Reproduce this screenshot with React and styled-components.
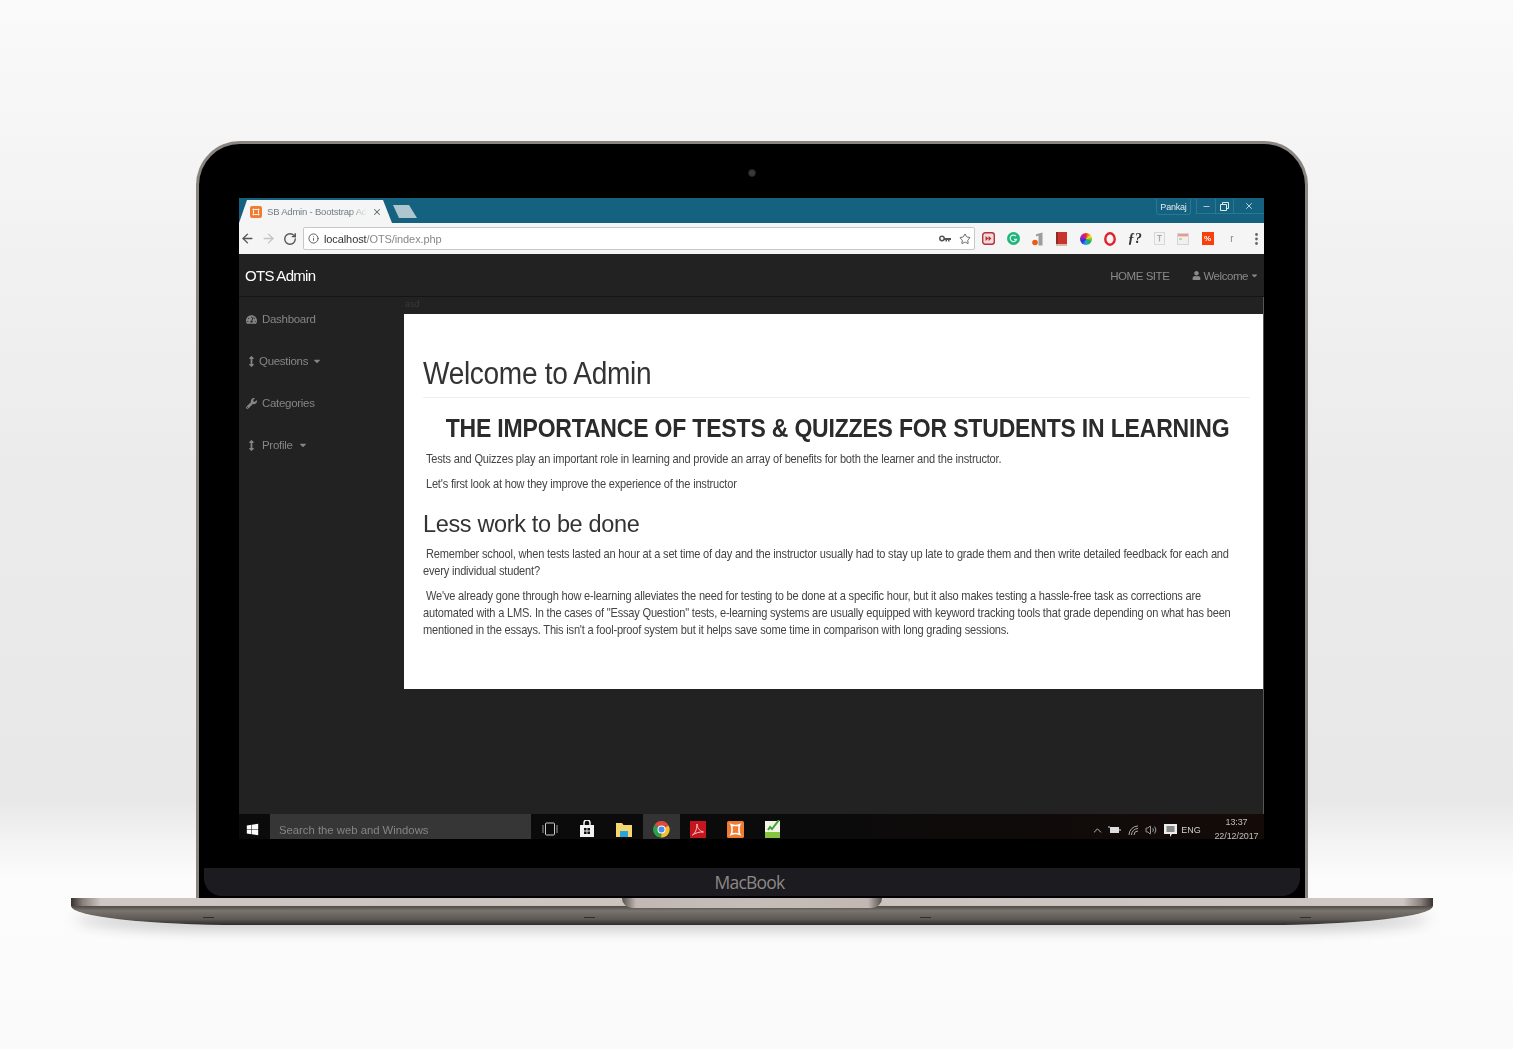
import React from 'react'
import styled, { createGlobalStyle } from 'styled-components'
import { ArrowLeft, ArrowRight, RotateCw, Info, Star, X, Minus, ChevronUp, Volume2 } from 'lucide-react'
import { FaTachometerAlt, FaArrowsAltV, FaWrench, FaUser, FaWindows, FaCaretDown } from 'react-icons/fa'

const Global = createGlobalStyle`
  html, body { margin: 0; padding: 0; }
  body { font-family: "Liberation Sans", Arial, sans-serif; }
`

const Page = styled.div`
  width: 1513px;
  height: 1049px;
  box-sizing: border-box;
  padding: 141px 0 0 71px;
  overflow: hidden;
  background: linear-gradient(180deg, #fafafa 0, #f2f2f2 230px, #ebebeb 480px, #e8e8e8 800px, #f3f3f3 840px, #fcfcfc 880px, #fafafa 1049px);
`

const Lid = styled.div`
  width: 1112px;
  margin-left: 125px;
  box-sizing: border-box;
  border: 3px solid #8b8580;
  border-bottom: 0;
  border-radius: 44px 44px 0 0;
  background: #000;
  padding: 54px 0 2px;
  position: relative;
`

const Camera = styled.div`
  position: absolute;
  left: 549px;
  top: 25px;
  width: 6px;
  height: 6px;
  border-radius: 50%;
  background: #3a3a3a;
  border: 1px solid #222;
`

const Screen = styled.div`
  width: 1025px;
  height: 641px;
  margin-left: 40px;
  background: #222;
  display: flex;
  flex-direction: column;
  overflow: hidden;
  filter: blur(0.35px);
`

const Chin = styled.div`
  height: 28px;
  margin: 29px 5px 0;
  background: #1c1b1f;
  border-radius: 0 0 18px 18px;
  display: flex;
  align-items: center;
  justify-content: center;
  padding-right: 5px;
  font-family: "Open Sans", sans-serif;
  font-size: 17.5px;
  letter-spacing: -0.8px;
  color: #8d8888;
`

const Base = styled.div`
  width: 1362px;
  position: relative;
`

const BaseTop = styled.div`
  height: 8px;
  background: linear-gradient(90deg, #38322f 0, #8a817c 12px, #cfc7c3 30px, #cbc3be 50%, #cfc7c3 calc(100% - 30px), #8a817c calc(100% - 12px), #38322f 100%);
`

const BaseBottom = styled.div`
  height: 19px;
  border-radius: 0 0 170px 170px / 0 0 19px 19px;
  background: linear-gradient(180deg, #4f4a47 0, #7a746f 25%, #5d5854 70%, #2c2a29 100%);
  box-shadow: 0 8px 14px -3px rgba(0, 0, 0, 0.22);
`

const Notch = styled.div`
  position: absolute;
  left: 551px;
  top: 0;
  width: 260px;
  height: 10px;
  border-radius: 0 0 12px 12px;
  background: linear-gradient(90deg, #55504d 0, #c2b7b3 14px, #c6bdb9 50%, #c2b7b3 calc(100% - 14px), #55504d 100%);
`

const Foot = styled.span`
  position: absolute;
  left: ${p => p.$x}px;
  top: 19px;
  width: 11px;
  height: 1px;
  background: #2f2c2b;
`

/* browser chrome */
const TabStrip = styled.div`
  height: 25px;
  flex: none;
  background: #14627f;
  display: flex;
  align-items: flex-end;
`

const Tab = styled.div`
  width: 153px;
  height: 23px;
  flex: none;
  box-sizing: border-box;
  padding: 0 0 0 11px;
  background: #f5f5f5;
  clip-path: polygon(0 100%, 8px 0, 144px 0, 100% 100%);
  display: flex;
  align-items: center;
  gap: 5px;
  font-size: 9.5px;
  letter-spacing: -0.2px;
  color: #6f7f85;
`

const TabFav = styled.span`
  width: 12px;
  height: 12px;
  flex: none;
  border-radius: 2px;
  background: #f07b33;
  display: flex;
  align-items: center;
  justify-content: center;
`

const TabTitle = styled.span`
  width: 100px;
  flex: none;
  white-space: nowrap;
  mask-image: linear-gradient(90deg, #000 84%, transparent);
`

const NewTab = styled.div`
  width: 24px;
  height: 13px;
  margin: 0 0 5px 1px;
  background: #b0c6ce;
  clip-path: polygon(0 0, 16px 0, 100% 100%, 6px 100%);
`

const WinControls = styled.div`
  margin: 1px 0 0 auto;
  align-self: flex-start;
  display: flex;
  height: 16px;
  color: #dfe9ed;
`

const UserBadge = styled.div`
  width: 35px;
  height: 16px;
  margin-right: 5px;
  border: 1px solid #2a7896;
  border-top: 0;
  border-radius: 0 0 3px 3px;
  box-sizing: border-box;
  font-size: 9px;
  letter-spacing: -0.2px;
  display: flex;
  align-items: center;
  justify-content: center;
`

const WinBtn = styled.div`
  width: ${p => p.$w}px;
  height: 15px;
  border-bottom: 1px solid #2a7896;
  border-left: 1px solid #2a7896;
  box-sizing: border-box;
  display: flex;
  align-items: center;
  justify-content: center;
`

const Toolbar = styled.div`
  height: 31px;
  flex: none;
  background: #f5f5f5;
  display: flex;
  align-items: center;
`

const NavBtn = styled.div`
  width: 16px;
  flex: none;
  margin-right: 5.5px;
  display: flex;
  justify-content: center;
  color: ${p => (p.$off ? '#c4c4c4' : '#555')};
`

const Omnibox = styled.div`
  width: 672px;
  height: 23px;
  flex: none;
  margin-left: -0.5px;
  box-sizing: border-box;
  background: #fff;
  border: 1px solid #c8c8c8;
  border-radius: 2px;
  padding: 0 3px 0 4px;
  display: flex;
  align-items: center;
  font-size: 11px;
  color: #888;
  letter-spacing: -0.1px;
`

const InfoIcon = styled(Info)`
  margin-right: 5px;
  color: #555;
`

const Host = styled.b`
  font-weight: 400;
  color: #333;
`

const OmniRight = styled.div`
  margin-left: auto;
  display: flex;
  align-items: center;
  gap: 8px;
  color: #555;
`

const Extensions = styled.div`
  flex: none;
  display: flex;
  align-items: center;
  margin-left: 1.8px;
`

const ExtSlot = styled.div`
  width: 24.3px;
  height: 20px;
  display: flex;
  align-items: center;
  justify-content: center;
`

const ColorWheel = styled.span`
  width: 12px;
  height: 12px;
  border-radius: 50%;
  background: conic-gradient(#f0262b, #f5e10f, #22b14c, #1ea5e8, #2a2fd8, #b01fb5, #f0262b);
`

const FTag = styled.span`
  font-family: "Liberation Serif", serif;
  font-style: italic;
  font-weight: 700;
  font-size: 14px;
  color: #333;
`

const PctTag = styled.span`
  width: 12px;
  height: 13px;
  background: #f8400e;
  color: #fff;
  font-size: 8px;
  font-weight: 700;
  display: flex;
  align-items: center;
  justify-content: center;
`

const RTag = styled.span`
  font-size: 10px;
  color: #888;
`

/* admin page */
const Navbar = styled.div`
  height: 43px;
  flex: none;
  box-sizing: border-box;
  background: #222;
  border-bottom: 1px solid #151515;
  padding: 1px 5px 0 6px;
  display: flex;
  align-items: center;
`

const Brand = styled.div`
  font-size: 15px;
  letter-spacing: -0.7px;
  color: #fff;
  margin-right: auto;
`

const NavLink = styled.div`
  font-size: 11.5px;
  letter-spacing: -0.45px;
  color: #8a8a8a;
  margin-left: ${p => p.$ml || 0}px;
  display: flex;
  align-items: center;
  gap: 2px;
`

const Body = styled.div`
  flex: 1;
  display: flex;
  min-height: 0;
  border-right: 1px solid #555;
`

const Sidebar = styled.div`
  width: 165px;
  flex: none;
  padding: 1px 0 0 7px;
  box-sizing: border-box;
`

const SideItem = styled.div`
  height: 42px;
  display: flex;
  align-items: center;
  gap: ${p => p.$gap}px;
  font-size: 11.5px;
  letter-spacing: -0.3px;
  color: #858585;
`

const Caret = styled(FaCaretDown)`
  margin-left: ${p => p.$ml}px;
`

const Main = styled.div`
  flex: 1;
  min-width: 0;
`

const Crumb = styled.div`
  height: 17px;
  padding-left: 1px;
  font-size: 9px;
  line-height: 15px;
  color: #3a3a3a;
`

const Card = styled.div`
  height: 375px;
  box-sizing: border-box;
  background: #fff;
  padding: 0 13px 0 19px;
  color: #333;
  overflow: hidden;
`

const TitleBlock = styled.div`
  height: 84px;
  box-sizing: border-box;
  padding-top: 42px;
  border-bottom: 1px solid #eee;
`

const Title = styled.h1`
  margin: 0;
  font-size: 31px;
  line-height: 36px;
  font-weight: 400;
  letter-spacing: -0.35px;
  white-space: nowrap;
  color: #333;
  transform: scaleX(0.905);
  transform-origin: left;
`

const Headline = styled.h2`
  margin: 16px -21px 0 -19px;
  text-align: center;
  white-space: nowrap;
  font-size: 25px;
  line-height: 28px;
  font-weight: 700;
  letter-spacing: -0.2px;
  color: #2b2b2b;
  transform: scaleX(0.92);
`

const Para = styled.p`
  margin: ${p => p.$mt}px 0 0;
  width: 871px;
  font-size: 11.9px;
  line-height: 17px;
  letter-spacing: -0.21px;
  text-indent: 3.2px;
  color: #444;
  transform: scaleX(0.93);
  transform-origin: left;
`

const SubTitle = styled.h3`
  margin: 17px 0 0;
  font-size: 23.5px;
  line-height: 28px;
  font-weight: 400;
  letter-spacing: -0.35px;
  color: #333;
`

/* taskbar */
const Taskbar = styled.div`
  height: 25px;
  flex: none;
  background: linear-gradient(90deg, #0b0b0b 0, #0c0b0b 60%, #140b08 100%);
  display: flex;
  align-items: stretch;
  margin-top: auto;
`

const StartBtn = styled.div`
  width: 31px;
  box-sizing: border-box;
  padding: 6px 5px 0 0;
  display: flex;
  align-items: center;
  justify-content: center;
  color: #fff;
`

const SearchBox = styled.div`
  width: 261px;
  background: #363636;
  box-sizing: border-box;
  padding: 6px 0 0 9px;
  display: flex;
  align-items: center;
  font-size: 11.3px;
  color: #858585;
`

const TaskSlot = styled.div`
  width: 37.2px;
  flex: none;
  box-sizing: border-box;
  padding-top: 5px;
  display: flex;
  align-items: center;
  justify-content: center;
  background: ${p => (p.$active ? '#333' : 'transparent')};
  color: #e8e8e8;
`

const Tray = styled.div`
  margin-left: auto;
  display: flex;
  align-items: center;
  color: #cfcfcf;
`

const TraySlot = styled.div`
  width: ${p => p.$w}px;
  padding-top: 7px;
  display: flex;
  align-items: center;
  justify-content: center;
  font-size: 9px;
`

const Clock = styled.div`
  width: 55px;
  height: 25px;
  box-sizing: border-box;
  padding-top: 1px;
  margin-left: 10px;
  overflow: hidden;
  text-align: center;
  font-size: 9px;
  line-height: 14px;
  letter-spacing: -0.1px;
  color: #bdbdbd;
`

const extensions = [
  <svg width="13" height="13" viewBox="0 0 13 13"><rect x="0.7" y="0.7" width="11.6" height="11.6" rx="2.5" fill="#f3dada" stroke="#b5323a" strokeWidth="1.4" /><path d="M3.5 4v5l3-2.5zM6.5 4v5l3-2.5z" fill="#b5323a" /></svg>,
  <svg width="13" height="13" viewBox="0 0 13 13"><circle cx="6.5" cy="6.5" r="6.5" fill="#1fb57a" /><path d="M9 4.2A3.3 3.3 0 1 0 9.6 7.4H7" fill="none" stroke="#d9f5ea" strokeWidth="1.2" /></svg>,
  <svg width="12" height="14" viewBox="0 0 12 14"><path d="M4 2.2 10.5 0.5V13.5H6.5V3.5L4 4.5z" fill="#9c9c9c" /><circle cx="3" cy="10.5" r="2.8" fill="#ea5b16" /></svg>,
  <svg width="11" height="14" viewBox="0 0 11 14"><rect width="11" height="12.5" fill="#c9342c" /><rect width="2" height="12.5" fill="#8f2a25" /><rect y="12" width="11" height="2" fill="#d9b9a8" /></svg>,
  <ColorWheel />,
  <svg width="12" height="14" viewBox="0 0 12 14"><ellipse cx="6" cy="7" rx="4.7" ry="5.7" fill="none" stroke="#e0202c" strokeWidth="2.4" /></svg>,
  <FTag>ƒ?</FTag>,
  <svg width="11" height="13" viewBox="0 0 11 13"><rect x="0.5" y="0.5" width="10" height="12" fill="#f3f3f3" stroke="#d8d8d8" /><path d="M3 3.5h5M5.5 3.5v6" stroke="#aaa" strokeWidth="1.2" fill="none" /></svg>,
  <svg width="12" height="12" viewBox="0 0 12 12"><rect x="0.5" y="0.5" width="11" height="11" fill="#f0f0f0" stroke="#d5d5d5" /><rect x="1" y="1" width="10" height="2.4" fill="#ea9a8a" /><rect x="2" y="5" width="3" height="2" fill="#b7d9a8" /></svg>,
  <PctTag>%</PctTag>,
  <RTag>r</RTag>,
  <svg width="3" height="12" viewBox="0 0 3 12"><circle cx="1.5" cy="1.5" r="1.4" fill="#666" /><circle cx="1.5" cy="6" r="1.4" fill="#666" /><circle cx="1.5" cy="10.5" r="1.4" fill="#666" /></svg>,
]

const taskIcons = [
  <svg width="16" height="14" viewBox="0 0 16 14"><rect x="3.5" y="1" width="9" height="12" rx="1" fill="none" stroke="#ccc" /><path d="M1 3v8M15 3v8" stroke="#999" /></svg>,
  <svg width="16" height="18" viewBox="0 0 16 18"><path d="M1 5h14v12H1z" fill="#f2f2f2" /><path d="M5 5V3a3 3 0 0 1 6 0v2" fill="none" stroke="#f2f2f2" strokeWidth="1.5" /><path d="M5 8h2.6v2.6H5zM8.4 8H11v2.6H8.4zM5 11.4h2.6V14H5zM8.4 11.4H11V14H8.4z" fill="#111" /></svg>,
  <svg width="16" height="15" viewBox="0 0 16 15"><path d="M0 1h6l1.500 2H16v12H0z" fill="#f6d66f" /><rect x="4" y="9" width="8" height="6" fill="#2ba4dd" /></svg>,
  <svg width="17" height="17" viewBox="0 0 34 34"><path d="M17 17 3 8a16 16 0 0 1 28 1z" fill="#dd4b3e" /><path d="M17 17 31 9a16 16 0 0 1-15 24z" fill="#f6c02d" /><path d="M17 17 16 33A16 16 0 0 1 3 8z" fill="#2fa04a" /><circle cx="17" cy="17" r="8" fill="#fff" /><circle cx="17" cy="17" r="6" fill="#4a8af4" /></svg>,
  <svg width="16" height="17" viewBox="0 0 16 17"><rect width="16" height="17" fill="#c4161c" /><path d="M2.500 14c3-1.500 4.500-7 4.500-11 0 3 2 7 6.500 8-4-.2-8 .8-11 3z" fill="none" stroke="#f4c6c6" strokeWidth="1" /></svg>,
  <svg width="17" height="17" viewBox="0 0 16 16"><rect width="16" height="16" rx="1.500" fill="#f07b33" /><path d="M4 3.500c2 1 6 1 8 0-1 2-1 7 0 9-2-1-6-1-8 0 1-2 1-7 0-9z" fill="none" stroke="#fff" strokeWidth="1.500" /></svg>,
  <svg width="15" height="18" viewBox="0 0 15 18"><path d="M0 1h15v17H0z" fill="#f3f3e6" /><path d="M3 10l2-3 2 2 7-9" fill="none" stroke="#3fa535" strokeWidth="2" /><rect y="12" width="15" height="6" fill="#86c440" /></svg>,
]

export default function App() {
  return (
    <Page>
      <Global />
      <Lid>
        <Camera />
        <Screen>
          <TabStrip>
            <Tab>
              <TabFav>
                <svg width="8" height="8" viewBox="0 0 8 8"><path d="M1 1c2 .7 4 .7 6 0-.7 2-.7 4 0 6-2-.7-4-.7-6 0 .7-2 .7-4 0-6z" fill="none" stroke="#fff" /></svg>
              </TabFav>
              <TabTitle>SB Admin - Bootstrap Ad</TabTitle>
              <X size={10} color="#5a6a70" strokeWidth={2.5} />
            </Tab>
            <NewTab />
            <WinControls>
              <UserBadge>Pankaj</UserBadge>
              <WinBtn $w={19}><Minus size={9} strokeWidth={2} /></WinBtn>
              <WinBtn $w={18}>
                <svg width="9" height="9" viewBox="0 0 9 9"><path d="M2.500 2.500V.5h6v6H6.500M.5 2.500h6v6h-6z" fill="none" stroke="currentColor" /></svg>
              </WinBtn>
              <WinBtn $w={31}><X size={10} strokeWidth={2} /></WinBtn>
            </WinControls>
          </TabStrip>
          <Toolbar>
            <NavBtn><ArrowLeft size={15} strokeWidth={2.2} /></NavBtn>
            <NavBtn $off><ArrowRight size={15} strokeWidth={2.2} /></NavBtn>
            <NavBtn><RotateCw size={14} strokeWidth={2.4} /></NavBtn>
            <Omnibox>
              <InfoIcon size={11} strokeWidth={2} />
              <Host>localhost</Host>/OTS/index.php
              <OmniRight>
                <svg width="12" height="7" viewBox="0 0 12 7"><circle cx="3" cy="3.500" r="2.200" fill="none" stroke="#555" strokeWidth="1.500" /><path d="M5 3h7v2h-1.500v1.500H9V5H8v1.500H6.500V5H5z" fill="#555" /></svg>
                <Star size={12} strokeWidth={1.8} />
              </OmniRight>
            </Omnibox>
            <Extensions>
              {extensions.map((icon, i) => <ExtSlot key={i}>{icon}</ExtSlot>)}
            </Extensions>
          </Toolbar>
          <Navbar>
            <Brand>OTS Admin</Brand>
            <NavLink>HOME SITE</NavLink>
            <NavLink $ml={23}><FaUser size={9} />Welcome<FaCaretDown size={9} /></NavLink>
          </Navbar>
          <Body>
            <Sidebar>
              <SideItem $gap={5}><FaTachometerAlt size={11} />Dashboard</SideItem>
              <SideItem $gap={2}><FaArrowsAltV size={11} />Questions<Caret size={10} $ml={2} /></SideItem>
              <SideItem $gap={5}><FaWrench size={11} />Categories</SideItem>
              <SideItem $gap={5}><FaArrowsAltV size={11} />Profile<Caret size={10} $ml={0} /></SideItem>
            </Sidebar>
            <Main>
              <Crumb>asd</Crumb>
              <Card>
                <TitleBlock>
                  <Title>Welcome to Admin</Title>
                </TitleBlock>
                <Headline>THE IMPORTANCE OF TESTS &amp; QUIZZES FOR STUDENTS IN LEARNING</Headline>
                <Para $mt={9}>Tests and Quizzes play an important role in learning and provide an array of benefits for both the learner and the instructor.</Para>
                <Para $mt={8}>Let's first look at how they improve the experience of the instructor</Para>
                <SubTitle>Less work to be done</SubTitle>
                <Para $mt={8}>Remember school, when tests lasted an hour at a set time of day and the instructor usually had to stay up late to grade them and then write detailed feedback for each and every individual student?</Para>
                <Para $mt={8}>We've already gone through how e-learning alleviates the need for testing to be done at a specific hour, but it also makes testing a hassle-free task as corrections are automated with a LMS. In the cases of "Essay Question" tests, e-learning systems are usually equipped with keyword tracking tools that grade depending on what has been mentioned in the essays. This isn't a fool-proof system but it helps save some time in comparison with long grading sessions.</Para>
              </Card>
            </Main>
          </Body>
          <Taskbar>
            <StartBtn><FaWindows size={13} /></StartBtn>
            <SearchBox>Search the web and Windows</SearchBox>
            {taskIcons.map((icon, i) => <TaskSlot key={i} $active={i === 3}>{icon}</TaskSlot>)}
            <Tray>
              <TraySlot $w={16}><ChevronUp size={13} strokeWidth={1.6} /></TraySlot>
              <TraySlot $w={18}>
                <svg width="13" height="10" viewBox="0 0 13 10"><rect x="2" y="2" width="9" height="6" fill="#ddd" /><path d="M12 4v2M1 1v2" stroke="#ddd" /></svg>
              </TraySlot>
              <TraySlot $w={22}>
                <svg width="12" height="11" viewBox="0 0 12 11"><path d="M1 10a9 9 0 0 1 9-9M3.500 10a6.500 6.500 0 0 1 6.500-6.500M6 10a4 4 0 0 1 4-4" fill="none" stroke="#aaa" /></svg>
              </TraySlot>
              <TraySlot $w={12}><Volume2 size={12} strokeWidth={1.5} /></TraySlot>
              <TraySlot $w={26}>
                <svg width="13" height="13" viewBox="0 0 13 13"><path d="M0 0h13v10H8l-2 3v-3H0z" fill="#eee" /><path d="M2.500 3h8M2.500 5h8M2.500 7h8" stroke="#222" /></svg>
              </TraySlot>
              <TraySlot $w={16}>ENG</TraySlot>
              <Clock>13:37<br />22/12/2017</Clock>
            </Tray>
          </Taskbar>
        </Screen>
        <Chin>MacBook</Chin>
      </Lid>
      <Base>
        <BaseTop />
        <BaseBottom />
        <Notch />
        <Foot $x={132} />
        <Foot $x={513} />
        <Foot $x={849} />
        <Foot $x={1229} />
      </Base>
    </Page>
  )
}
